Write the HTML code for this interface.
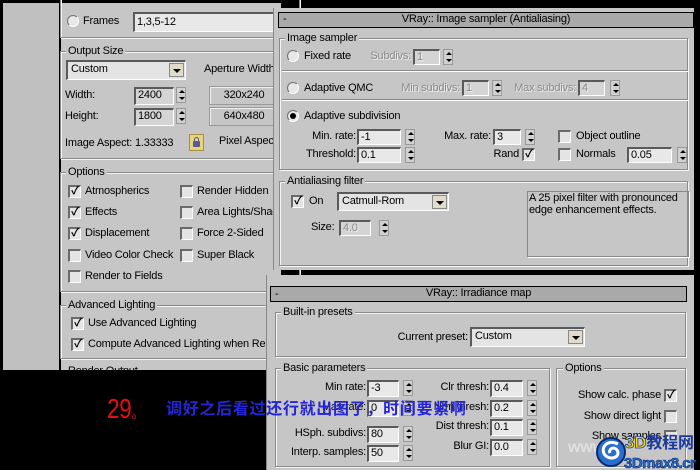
<!DOCTYPE html>
<html><head><meta charset="utf-8"><style>
*{box-sizing:border-box;margin:0;padding:0}
body{width:700px;height:470px;overflow:hidden;background:#000;position:relative;font-family:"Liberation Sans","Noto Sans CJK SC",sans-serif;font-size:11px;letter-spacing:-0.2px;color:#000}
div,span{position:absolute}
.g{background:#c6c6c6}
.t{white-space:nowrap;line-height:14px}
.dis{color:#8a8a8a;text-shadow:1px 1px 0 #eee}
.grp{border:1px solid #8a8a8a;box-shadow:inset 1px 1px 0 #f4f4f4,1px 1px 0 #f4f4f4}
.lg{background:#c6c6c6;padding:0 2px;line-height:14px;white-space:nowrap}
.inp{background:#d4d4d4;border-top:2px solid #5a5a5a;border-left:2px solid #5a5a5a;border-right:1px solid #fff;border-bottom:1px solid #fff;line-height:13px;padding-left:2px;white-space:nowrap}
.inp.w{background:#e8e8e8}
.sp{width:10px;height:16px;background:#d0d0d0;border:1px solid #999}
.sp:before{content:"";position:absolute;left:2px;top:2px;border:3px solid transparent;border-bottom:3px solid #000;border-top:0}
.sp:after{content:"";position:absolute;left:2px;bottom:2px;border:3px solid transparent;border-top:3px solid #000;border-bottom:0}
.cb{width:13px;height:13px;background:#e4e4e4;border-top:2px solid #6a6a6a;border-left:2px solid #6a6a6a;border-right:1px solid #fff;border-bottom:1px solid #fff;font-size:11px;line-height:9px;text-align:center;font-weight:bold}
.rb{width:12px;height:12px;border-radius:50%;background:#e8e8e8;border:1px solid #707070;border-right-color:#fff;border-bottom-color:#fff}
.rb.on:after{content:"";position:absolute;left:2px;top:2px;width:6px;height:6px;border-radius:50%;background:#000}
.dd{background:#e4e4e4;border-top:2px solid #5a5a5a;border-left:2px solid #5a5a5a;border-right:1px solid #fff;border-bottom:1px solid #fff;padding-left:3px;line-height:15px}
.dd b{position:absolute;right:1px;top:1px;width:15px;height:14px;background:#e0dcc8;border:1px solid #888}
.dd b:after{content:"";position:absolute;left:3px;top:5px;border:4px solid transparent;border-top:4px solid #000;border-bottom:0}
.btn{background:#c6c6c6;border:1px solid #999;box-shadow:inset 1px 1px 0 #eee;text-align:center;line-height:17px}
.bar{background:#a9a9a9;border:1px solid #000;line-height:13px;text-align:center}
</style></head><body>
<div class="g" style="left:3px;top:3px;width:56px;height:367px;background:#c0c0c0"></div>
<div class="g" style="left:61px;top:3px;width:220px;height:367px"></div>
<div style="left:0;top:370px;width:266px;height:100px;background:#000"></div>

<div class="grp" style="left:60px;top:-2px;width:240px;height:40px"></div>
<div class="rb" style="left:67px;top:15px"></div>
<span class="t" style="left:83px;top:14px">Frames</span>
<div class="inp w" style="left:133px;top:12px;width:160px;height:20px;line-height:16px">1,3,5-12</div>

<div class="grp" style="left:60px;top:51px;width:240px;height:108px"></div>
<span class="lg" style="left:66px;top:44px">Output Size</span>
<div class="dd" style="left:66px;top:60px;width:120px;height:20px">Custom<b></b></div>
<span class="t" style="left:204px;top:62px">Aperture Width</span>
<span class="t" style="left:65px;top:88px">Width:</span>
<div class="inp" style="left:134px;top:87px;width:40px;height:18px">2400</div>
<div class="sp" style="left:176px;top:87px"></div>
<div class="btn" style="left:209px;top:86px;width:70px;height:19px">320x240</div>
<span class="t" style="left:65px;top:109px">Height:</span>
<div class="inp" style="left:134px;top:108px;width:40px;height:18px">1800</div>
<div class="sp" style="left:176px;top:108px"></div>
<div class="btn" style="left:209px;top:107px;width:70px;height:19px">640x480</div>
<span class="t" style="left:65px;top:136px">Image Aspect: 1.33333</span>
<div style="left:189px;top:134px;width:15px;height:17px;background:#e8d27a;border:1px solid #a89040"><div style="left:3px;top:6px;width:7px;height:6px;background:#5a5a9a;border-radius:1px"></div><div style="left:4px;top:2px;width:5px;height:5px;border:1px solid #5a5a9a;border-bottom:0;border-radius:3px 3px 0 0"></div></div>
<span class="t" style="left:219px;top:134px">Pixel Aspect</span>

<div class="grp" style="left:60px;top:172px;width:240px;height:120px"></div>
<span class="lg" style="left:66px;top:165px">Options</span>
<div class="cb" style="left:68px;top:185px">✓</div><span class="t" style="left:85px;top:184px">Atmospherics</span>
<div class="cb" style="left:68px;top:206px">✓</div><span class="t" style="left:85px;top:205px">Effects</span>
<div class="cb" style="left:68px;top:227px">✓</div><span class="t" style="left:85px;top:226px">Displacement</span>
<div class="cb" style="left:68px;top:249px"></div><span class="t" style="left:85px;top:248px">Video Color Check</span>
<div class="cb" style="left:68px;top:270px"></div><span class="t" style="left:85px;top:269px">Render to Fields</span>
<div class="cb" style="left:180px;top:185px"></div><span class="t" style="left:197px;top:184px">Render Hidden</span>
<div class="cb" style="left:180px;top:206px"></div><span class="t" style="left:197px;top:205px">Area Lights/Shadows</span>
<div class="cb" style="left:180px;top:227px"></div><span class="t" style="left:197px;top:226px">Force 2-Sided</span>
<div class="cb" style="left:180px;top:249px"></div><span class="t" style="left:197px;top:248px">Super Black</span>

<div class="grp" style="left:60px;top:305px;width:240px;height:54px"></div>
<span class="lg" style="left:66px;top:298px">Advanced Lighting</span>
<div class="cb" style="left:71px;top:317px">✓</div><span class="t" style="left:88px;top:316px">Use Advanced Lighting</span>
<div class="cb" style="left:71px;top:338px">✓</div><span class="t" style="left:88px;top:337px">Compute Advanced Lighting when Rendering</span>
<span class="t" style="left:68px;top:364px;height:6px;overflow:hidden">Render Output</span>

<div style="left:410px;top:0;width:290px;height:8px;background:#000"></div>
<div style="left:694px;top:0;width:6px;height:470px;background:#000"></div>

<div class="g" style="left:273px;top:8px;width:421px;height:262px;border-left:1px solid #888"></div>
<div class="bar" style="left:278px;top:12px;width:416px;height:16px">VRay:: Image sampler (Antialiasing)</div>
<span class="t" style="left:283px;top:12px">-</span>
<div class="grp" style="left:279px;top:38px;width:409px;height:132px"></div>
<span class="lg" style="left:285px;top:31px">Image sampler</span>
<div class="rb" style="left:287px;top:50px"></div><span class="t" style="left:304px;top:49px">Fixed rate</span>
<span class="t dis" style="right:289px;top:49px">Subdivs:</span>
<div class="inp dis" style="left:413px;top:49px;width:27px;height:16px">1</div><div class="sp" style="left:443px;top:49px"></div>
<div style="left:282px;top:70px;width:406px;height:2px;border-top:1px solid #888;border-bottom:1px solid #fff"></div>
<div class="rb" style="left:287px;top:82px"></div><span class="t" style="left:304px;top:81px">Adaptive QMC</span>
<span class="t dis" style="right:240px;top:81px">Min subdivs:</span>
<div class="inp dis" style="left:462px;top:80px;width:27px;height:16px">1</div><div class="sp" style="left:492px;top:80px"></div>
<span class="t dis" style="right:124px;top:81px">Max subdivs:</span>
<div class="inp dis" style="left:578px;top:80px;width:27px;height:16px">4</div><div class="sp" style="left:610px;top:80px"></div>
<div style="left:282px;top:99px;width:406px;height:2px;border-top:1px solid #888;border-bottom:1px solid #fff"></div>
<div class="rb on" style="left:287px;top:110px"></div><span class="t" style="left:304px;top:109px">Adaptive subdivision</span>
<span class="t" style="right:344px;top:129px">Min. rate:</span>
<div class="inp w" style="left:357px;top:129px;width:44px;height:16px">-1</div><div class="sp" style="left:405px;top:129px"></div>
<span class="t" style="right:344px;top:147px">Threshold:</span>
<div class="inp w" style="left:357px;top:147px;width:44px;height:16px">0.1</div><div class="sp" style="left:405px;top:147px"></div>
<span class="t" style="right:209px;top:129px">Max. rate:</span>
<div class="inp w" style="left:493px;top:129px;width:28px;height:16px">3</div><div class="sp" style="left:525px;top:129px"></div>
<span class="t" style="right:181px;top:147px">Rand</span><div class="cb" style="left:522px;top:148px">✓</div>
<div class="cb" style="left:558px;top:130px"></div><span class="t" style="left:576px;top:129px">Object outline</span>
<div class="cb" style="left:558px;top:148px"></div><span class="t" style="left:576px;top:147px">Normals</span>
<div class="inp w" style="left:627px;top:147px;width:45px;height:16px">0.05</div><div class="sp" style="left:677px;top:147px"></div>

<div class="grp" style="left:279px;top:181px;width:409px;height:85px"></div>
<span class="lg" style="left:285px;top:174px">Antialiasing filter</span>
<div class="cb" style="left:291px;top:195px">✓</div><span class="t" style="left:309px;top:194px">On</span>
<div class="dd" style="left:337px;top:192px;width:112px;height:19px">Catmull-Rom<b></b></div>
<span class="t" style="left:311px;top:220px">Size:</span>
<div class="inp dis" style="left:339px;top:220px;width:32px;height:16px">4.0</div><div class="sp" style="left:379px;top:220px"></div>
<div style="left:527px;top:191px;width:162px;height:66px;border:1px solid #888;box-shadow:1px 1px 0 #fff;line-height:12px;white-space:normal;padding:0 1px">A 25 pixel filter with pronounced edge enhancement effects.</div>
<div style="left:410px;top:271px;width:284px;height:2px;background:#000"></div>

<div class="g" style="left:266px;top:275px;width:428px;height:195px;border-left:1px solid #888"></div>
<div class="bar" style="left:270px;top:286px;width:417px;height:16px">VRay:: Irradiance map</div>
<span class="t" style="left:275px;top:287px">-</span>
<div class="grp" style="left:275px;top:312px;width:411px;height:45px"></div>
<span class="lg" style="left:281px;top:305px">Built-in presets</span>
<span class="t" style="right:232px;top:330px">Current preset:</span>
<div class="dd" style="left:470px;top:327px;width:115px;height:20px">Custom<b></b></div>

<div class="grp" style="left:275px;top:368px;width:275px;height:99px"></div>
<span class="lg" style="left:281px;top:361px">Basic parameters</span>
<div class="grp" style="left:556px;top:368px;width:130px;height:99px"></div>
<span class="lg" style="left:563px;top:361px">Options</span>
<span class="t" style="right:334px;top:380px">Min rate:</span>
<div class="inp w" style="left:367px;top:380px;width:32px;height:17px">-3</div><div class="sp" style="left:403px;top:380px"></div>
<span class="t" style="right:334px;top:400px">Max rate:</span>
<div class="inp w" style="left:367px;top:400px;width:32px;height:17px">0</div><div class="sp" style="left:403px;top:400px"></div>
<span class="t" style="right:334px;top:426px">HSph. subdivs:</span>
<div class="inp w" style="left:367px;top:426px;width:32px;height:17px">80</div><div class="sp" style="left:403px;top:426px"></div>
<span class="t" style="right:334px;top:445px">Interp. samples:</span>
<div class="inp w" style="left:367px;top:445px;width:32px;height:17px">50</div><div class="sp" style="left:403px;top:445px"></div>
<span class="t" style="right:211px;top:380px">Clr thresh:</span>
<div class="inp w" style="left:490px;top:380px;width:33px;height:17px">0.4</div><div class="sp" style="left:527px;top:380px"></div>
<span class="t" style="right:211px;top:400px">Nrm thresh:</span>
<div class="inp w" style="left:490px;top:400px;width:33px;height:17px">0.2</div><div class="sp" style="left:527px;top:400px"></div>
<span class="t" style="right:211px;top:419px">Dist thresh:</span>
<div class="inp w" style="left:490px;top:419px;width:33px;height:17px">0.1</div><div class="sp" style="left:527px;top:419px"></div>
<span class="t" style="right:211px;top:439px">Blur GI:</span>
<div class="inp w" style="left:490px;top:439px;width:33px;height:17px">0.0</div><div class="sp" style="left:527px;top:439px"></div>
<span class="t" style="right:39px;top:388px">Show calc. phase</span><div class="cb" style="left:664px;top:389px">✓</div>
<span class="t" style="right:39px;top:409px">Show direct light</span><div class="cb" style="left:664px;top:410px"></div>
<span class="t" style="right:39px;top:429px">Show samples</span><div class="cb" style="left:664px;top:430px"></div>
<span class="t" style="left:568px;top:441px;color:#e0e0e0;font-size:16px;font-weight:bold">www</span>

<svg style="position:absolute;left:596px;top:430px" width="100" height="40">
<circle cx="15" cy="22" r="14" fill="#2a6fd0" stroke="#0a2a70" stroke-width="2"/>
<path d="M22 14 C10 8 3 20 10 26 C16 31 25 26 21 20 C18 16 12 19 14 23" fill="none" stroke="#fff" stroke-width="3"/>
<text x="29" y="18" font-family="Liberation Sans,Noto Sans CJK SC,sans-serif" font-weight="bold" font-size="17" fill="#ffd800" stroke="#1a3aa0" stroke-width="0.8">3D<tspan fill="#1a3aa0" stroke="none" font-size="16">教程网</tspan></text>
<text x="28" y="38" font-family="Liberation Sans,sans-serif" font-weight="bold" font-size="15" fill="#2a6fd0" stroke="#0a2a70" stroke-width="0.6" letter-spacing="-0.5">3Dmax8.cn</text>
</svg>

<span class="t" style="left:107px;top:394px;color:#e01010;font-size:28px;line-height:30px;transform:scaleX(0.8);transform-origin:left">29<span style="position:static;font-size:16px">。</span></span>
<span class="t" style="left:166px;top:400px;color:#2525d8;font-size:16px;line-height:20px;font-weight:bold;letter-spacing:0.7px">调好之后看过还行就出图了，时间要紧啊</span>
</body></html>
